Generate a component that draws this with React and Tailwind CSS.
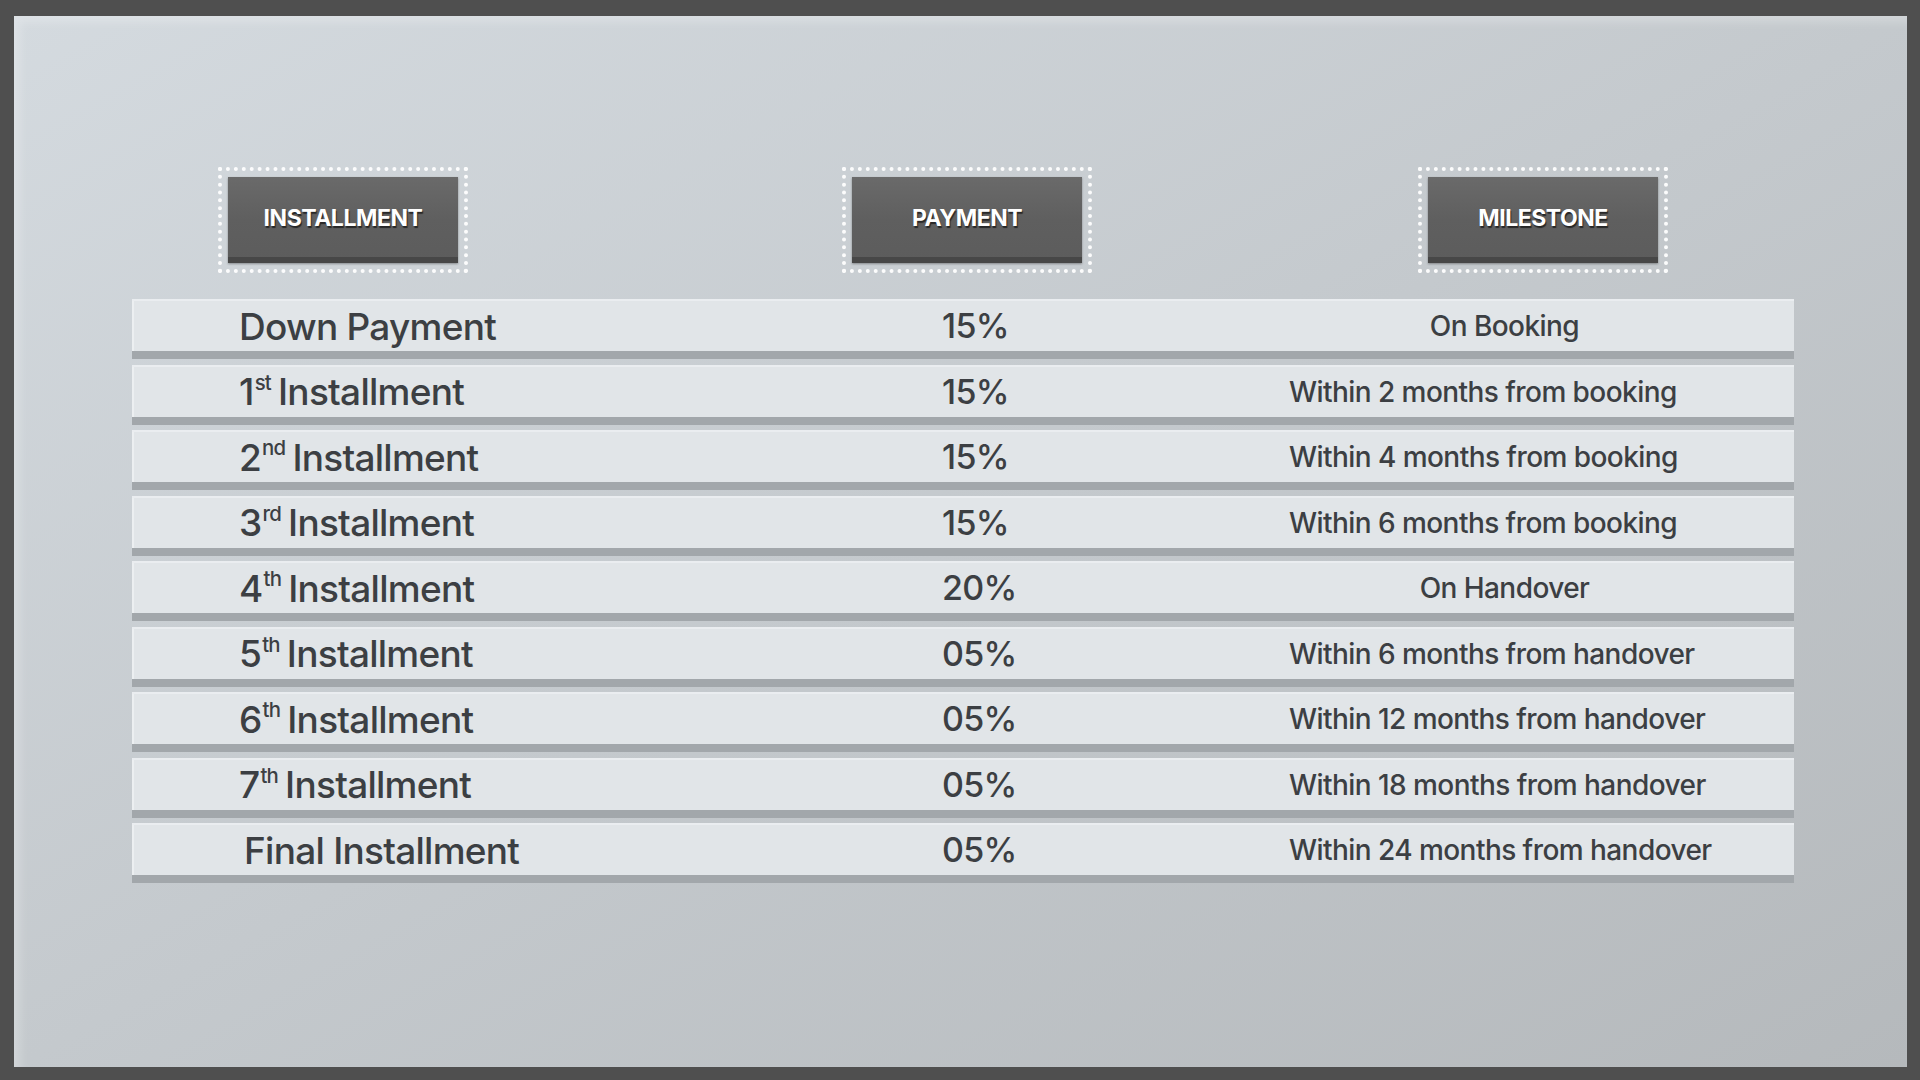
import React from 'react'

const rows = [
  { num: null, label: 'Down Payment', pay: '15%', milestone: 'On Booking', center: true },
  { num: '1', sup: 'st', pay: '15%', milestone: 'Within 2 months from booking' },
  { num: '2', sup: 'nd', pay: '15%', milestone: 'Within 4 months from booking' },
  { num: '3', sup: 'rd', pay: '15%', milestone: 'Within 6 months from booking' },
  { num: '4', sup: 'th', pay: '20%', milestone: 'On Handover', center: true },
  { num: '5', sup: 'th', pay: '05%', milestone: 'Within 6 months from handover' },
  { num: '6', sup: 'th', pay: '05%', milestone: 'Within 12 months from handover' },
  { num: '7', sup: 'th', pay: '05%', milestone: 'Within 18 months from handover' },
  { num: null, label: 'Final Installment', pay: '05%', milestone: 'Within 24 months from handover', shift: true },
]

function HeaderTag({ children }) {
  return (
    <div className="w-[250px] h-[106px] border-[4px] border-dotted border-white/95 p-[6px] flex">
      <div className="flex-1 flex items-center justify-center bg-gradient-to-b from-[#6a6a6a] via-[#5f5f5f] to-[#5c5c5c] shadow-[inset_0_-6px_0_#474747,0_1px_2px_rgba(0,0,0,0.35)]">
        <span className="text-white text-[23px] font-bold tracking-[-0.02em] [text-shadow:1px_2px_1px_rgba(0,0,0,0.6)] -mt-[4px]">
          {children}
        </span>
      </div>
    </div>
  )
}

function Row({ row }) {
  return (
    <div className="h-[52px] flex items-center bg-[#e1e5e8] border-t-2 border-[#eaedf0] shadow-[0_8px_0_#a2a7ab,inset_2px_0_0_#eceff1] text-[#3c3f43] whitespace-nowrap">
      <div className={`w-[810px] text-[37px] font-medium tracking-[-0.02em] leading-none ${row.shift ? 'pl-[112px]' : 'pl-[107px]'}`}>
        {row.num ? (
          <span>
            {row.num}
            <sup className="text-[0.55em] -top-[0.75em] mr-[7px] ml-[1px]">{row.sup}</sup>
            Installment
          </span>
        ) : (
          <span>{row.label}</span>
        )}
      </div>
      <div className="w-[347px] text-[34px] font-medium tracking-[-0.02em] leading-none">{row.pay}</div>
      <div className={`w-[431px] text-[28px] font-medium tracking-[-0.02em] leading-none ${row.center ? 'text-center' : ''}`}>
        {row.milestone}
      </div>
    </div>
  )
}

export default function App() {
  return (
    <div className="w-[1920px] h-[1080px] bg-[#4f4f4f] pt-[16px] pl-[14px] pr-[13px] pb-[13px] font-['Inter',sans-serif] overflow-hidden">
      <div className="h-full bg-gradient-to-br from-[#d4dadf] via-[#c4c9cd] to-[#b5b9bc] shadow-[inset_6px_6px_10px_rgba(255,255,255,0.25)] pt-[151px]">
        <div className="flex pl-[204px]">
          <HeaderTag>INSTALLMENT</HeaderTag>
          <div className="ml-[374px]">
            <HeaderTag>PAYMENT</HeaderTag>
          </div>
          <div className="ml-[326px]">
            <HeaderTag>MILESTONE</HeaderTag>
          </div>
        </div>
        <div className="ml-[118px] w-[1662px] mt-[26px] flex flex-col gap-[13.5px]">
          {rows.map((r, i) => (
            <Row key={i} row={r} />
          ))}
        </div>
      </div>
    </div>
  )
}
